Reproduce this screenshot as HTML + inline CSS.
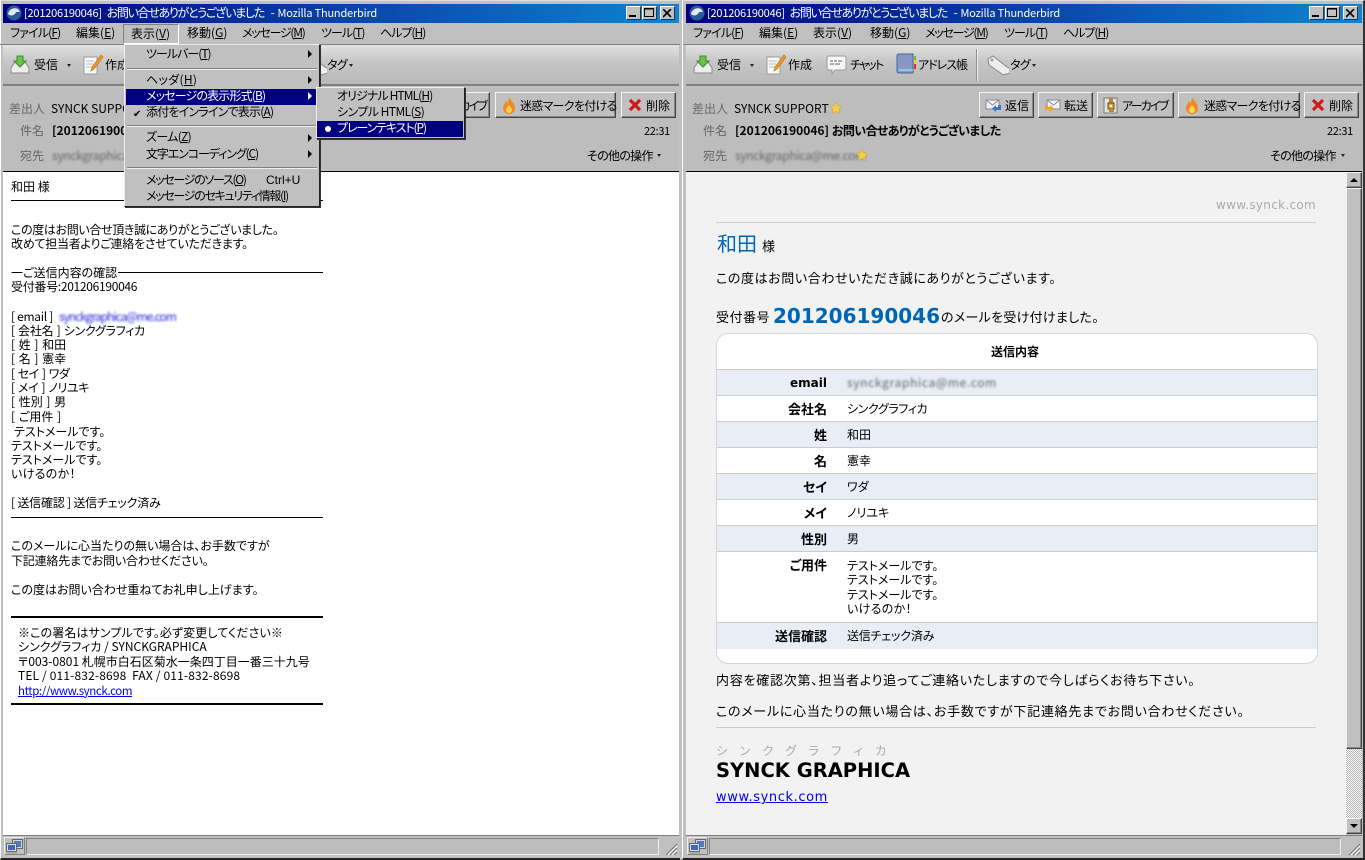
<!DOCTYPE html>
<html><head><meta charset="utf-8"><style>
html,body{margin:0;padding:0;width:1365px;height:860px;overflow:hidden;background:#c0c0c0}
*{box-sizing:border-box}
.a,.t,svg{position:absolute}
.t{white-space:nowrap;font:12px/14px "Noto Sans CJK JP","WenQuanYi Zen Hei",sans-serif;font-feature-settings:"palt";color:#000;margin-top:1px}
.l{font-family:"Liberation Sans","Noto Sans CJK JP",sans-serif}
.d{font-family:"DejaVu Sans","Noto Sans CJK JP",sans-serif}
.g{color:#666}
.b{font-weight:bold}
.w{color:#fff}
.s{font-size:11px;letter-spacing:-.2px}
.tj{letter-spacing:-1.3px;margin:0 4px 0 2px}
.bj{letter-spacing:-.55px}
.m{font-size:13px}
.win{position:absolute;top:0;height:860px;background:#c0c0c0;border-top:1px solid #dfdfdf;border-left:1px solid #fff;border-right:2px solid #333;border-bottom:2px solid #222;overflow:hidden}
.title{position:absolute;left:2px;top:3px;right:2px;height:19px;background:linear-gradient(90deg,#000080,#1084d0)}
.wb{position:absolute;top:6px;width:15px;height:14px;background:#c0c0c0;border:1px solid;border-color:#fff #333 #333 #fff}
.btn{position:absolute;top:92px;height:26px;background:#c0c0c0;border:1px solid;border-color:#f4f4f4 #444 #444 #f4f4f4;box-shadow:inset -1px -1px #888}
.arr{position:absolute;width:0;height:0;border-left:2.5px solid transparent;border-right:2.5px solid transparent;border-top:3px solid #222}
.pop{position:absolute;background:#c0c0c0;border:1px solid;border-color:#eee #222 #222 #eee;box-shadow:1px 1px 0 #333}
.hr{position:absolute;height:2px;border-top:1px solid #808080;border-bottom:1px solid #f0f0f0}
.ra{position:absolute;width:0;height:0;border-top:4px solid transparent;border-bottom:4px solid transparent;border-left:4px solid #000}
.k{position:absolute;height:1px;background:#000;left:11px;width:312px}
.row{position:absolute;left:717px;width:600px;border-bottom:1px solid #ccc}
.lab{font-weight:bold;right:538px}
.blur{filter:blur(1.1px)}
.br{word-spacing:1px}
.tm{font-size:11px;letter-spacing:-.3px}
.cell{position:absolute;top:837px;width:21px;height:18px;border:1px solid;border-color:#eee #808080 #808080 #eee}
</style></head><body>

<!-- LEFT WINDOW -->
<div class="win" style="left:0;width:683px"></div>
<div class="title" style="left:3px;width:676px;top:4px"></div>
<div class="a" style="left:0;top:23px;width:680px;height:22px;border-bottom:1px solid #808080"></div>
<div class="a" style="left:3px;top:45px;width:676px;height:41px;background:linear-gradient(#e2e2e2,#c8c8c8 40%,#b8b8b8);border-bottom:2px solid #808080"></div>
<div class="a" style="left:3px;top:88px;width:676px;height:84px;background:#bdbdbd;border-bottom:1px solid #000"></div>
<div class="a" style="left:3px;top:172px;width:676px;height:663px;background:#fff"></div>
<div class="a" style="left:3px;top:835px;width:676px;height:21px;background:#c0c0c0;border-top:1px solid #808080"></div>
<div class="a" style="left:26px;top:838px;width:633px;height:17px;background:#bdbdbd;border:1px solid;border-color:#808080 #eee #eee #808080"></div>

<svg style="left:6px;top:5px" width="16" height="16" viewBox="0 0 16 16"><circle cx="8" cy="8" r="7.5" fill="#2a5a9a"/><path d="M2 9c1-5 6-7 10-5l2 3-4 0c-1 3-5 5-8 2z" fill="#e8e8e8"/></svg>
<span class="t w" style="left:24px;top:5px"><span class="s">[201206190046]</span> <span class="tj">お問い合せありがとうございました</span> - <span class="s">Mozilla Thunderbird</span></span>
<div class="wb" style="left:626px"><svg style="left:2px;top:8px" width="8" height="2"><path d="M0 0h7v2H0z" fill="#000"/></svg></div>
<div class="wb" style="left:642px"><svg style="left:1px;top:1px" width="11" height="10"><path d="M.5.500h9v8h-9z M0 1h10" fill="none" stroke="#000"/></svg></div>
<div class="wb" style="left:660px"><svg style="left:2px;top:2px" width="10" height="9"><path d="M0 0l8 8M8 0L0 8" stroke="#000" stroke-width="1.6"/></svg></div>

<span class="t" style="left:10px;top:25px;letter-spacing:-.85px">ファイル(<u>F</u>)</span>
<span class="t" style="left:76px;top:25px">編集(<u>E</u>)</span>
<div class="a" style="left:123px;top:24px;width:56px;height:20px;border:1px solid;border-color:#808080 #fff #fff #808080"></div>
<span class="t" style="left:131px;top:26px">表示(<u>V</u>)</span>
<span class="t" style="left:187px;top:25px">移動(<u>G</u>)</span>
<span class="t" style="left:242px;top:25px;letter-spacing:-1.25px">メッセージ(<u>M</u>)</span>
<span class="t" style="left:321px;top:25px;letter-spacing:-1px">ツール(<u>T</u>)</span>
<span class="t" style="left:380px;top:25px;letter-spacing:-1px">ヘルプ(<u>H</u>)</span>

<svg style="left:10px;top:54px" width="20" height="20" viewBox="0 0 20 20"><path d="M1 14l4-6h10l4 6v5H1z" fill="#eee" stroke="#888"/><path d="M7 2h6v5h3l-6 6-6-6h3z" fill="#6cc24a" stroke="#3a8a2a"/></svg>
<span class="t" style="left:34px;top:57px">受信</span><div class="arr" style="left:67px;top:64px"></div>
<svg style="left:83px;top:54px" width="21" height="21" viewBox="0 0 21 21"><path d="M1 3h13v17H1z" fill="#fafafa" stroke="#999"/><path d="M3 7h8M3 10h7M3 13h6" stroke="#bbb"/><path d="M18 1l2 2-9 12-3 2 1-4z" fill="#f0962a" stroke="#b86a10" stroke-width=".6"/></svg>
<span class="t" style="left:105px;top:57px">作成</span>
<svg style="left:304px;top:54px" width="23" height="23" viewBox="0 0 23 23"><path d="M2 5l5-3 14 11a3.500 3.500 0 0 1-1 7 3.500 3.500 0 0 1-4 0L3 11z" fill="#eee" stroke="#888"/></svg>
<span class="t" style="left:327px;top:57px;letter-spacing:-.8px">タグ</span><div class="arr" style="left:349px;top:64px"></div>

<span class="t g" style="left:9px;top:101px">差出人</span>
<span class="t" style="left:51px;top:101px">SYNCK SUPPORT</span>
<span class="t g" style="left:20px;top:123px">件名</span>
<span class="t b" style="left:52px;top:123px">[201206190046] <span class="bj">お問い合せありがとうございました</span></span>
<span class="t g" style="left:20px;top:148px">宛先</span>
<span class="t blur g" style="left:52px;top:148px;letter-spacing:-.3px">synckgraphica@me.com</span>
<span class="t tm" style="left:644px;top:123px">22:31</span>
<span class="t" style="left:587px;top:148px;letter-spacing:-.7px">その他の操作</span><div class="arr" style="left:657px;top:154px"></div>

<div class="btn" style="left:400px;width:90px"></div><span class="t" style="right:879px;top:98px;letter-spacing:-1.8px">アーカイブ</span>
<div class="btn" style="left:495px;width:121px"></div>
<svg style="left:502px;top:97px" width="14" height="17" viewBox="0 0 14 17"><path d="M7 0c1 3 6 6 6 11a6 6 0 0 1-12 0c0-3 2-4 3-7 1 1 1 2 1 3 1-2 2-4 2-7z" fill="#f08a20"/><path d="M7 8c1 2 3 3 3 5a3 3 0 0 1-6 0c0-2 2-3 3-5z" fill="#fcd25a"/></svg>
<span class="t" style="left:520px;top:98px;letter-spacing:-.7px">迷惑マークを付ける</span>
<div class="btn" style="left:621px;width:55px"></div>
<svg style="left:628px;top:98px" width="14" height="14" viewBox="0 0 14 14"><path d="M2 2l10 10M12 2L2 12" stroke="#d01818" stroke-width="3.2"/></svg>
<span class="t" style="left:646px;top:98px">削除</span>

<!-- left body -->
<span class="t" style="left:11px;top:179px">和田 様</span><div class="k" style="top:200px"></div>
<span class="t" style="left:11px;top:222px;letter-spacing:-.35px">この度はお問い合せ頂き誠にありがとうございました。</span>
<span class="t" style="left:11px;top:236px;letter-spacing:-.25px">改めて担当者よりご連絡をさせていただきます。</span>
<span class="t" style="left:11px;top:265px">一ご送信内容の確認</span><div class="k" style="top:272px;left:118px;width:205px"></div>
<span class="t" style="left:11px;top:279px;letter-spacing:-.3px">受付番号:201206190046</span>
<span class="t" style="left:11px;top:309px;letter-spacing:-.3px">[ email ]</span>
<span class="t blur" style="left:59px;top:309px;color:#2a2ad8;letter-spacing:-1px">synckgraphica@me.com</span>
<span class="t br" style="left:11px;top:323px;letter-spacing:-.3px">[ 会社名 ] シンクグラフィカ</span>
<span class="t br" style="left:11px;top:337px">[ 姓 ] 和田</span>
<span class="t br" style="left:11px;top:351px">[ 名 ] 憲幸</span>
<span class="t br" style="left:11px;top:366px;letter-spacing:-.5px">[ セイ ] ワダ</span>
<span class="t br" style="left:11px;top:380px;letter-spacing:-.4px">[ メイ ] ノリユキ</span>
<span class="t br" style="left:11px;top:394px">[ 性別 ] 男</span>
<span class="t br" style="left:11px;top:409px">[ ご用件 ]</span>
<span class="t" style="left:14px;top:424px">テストメールです。</span>
<span class="t" style="left:11px;top:438px">テストメールです。</span>
<span class="t" style="left:11px;top:452px">テストメールです。</span>
<span class="t" style="left:11px;top:466px;letter-spacing:.3px">いけるのか！</span>
<span class="t" style="left:11px;top:495px;letter-spacing:-.2px">[ 送信確認 ] 送信チェック済み</span><div class="k" style="top:517px"></div>
<span class="t" style="left:11px;top:538px">このメールに心当たりの無い場合は、お手数ですが</span>
<span class="t" style="left:11px;top:553px;letter-spacing:-.2px">下記連絡先までお問い合わせください。</span>
<span class="t" style="left:11px;top:582px">この度はお問い合わせ重ねてお礼申し上げます。</span>
<div class="k" style="top:616px;height:2px"></div>
<span class="t" style="left:18px;top:625px;letter-spacing:.1px">※この署名はサンプルです。必ず変更してください※</span>
<span class="t" style="left:18px;top:639px">シンクグラフィカ / SYNCKGRAPHICA</span>
<span class="t" style="left:18px;top:654px">〒003-0801 札幌市白石区菊水一条四丁目一番三十九号</span>
<span class="t" style="left:18px;top:668px;letter-spacing:.15px">TEL / 011-832-8698&nbsp; FAX / 011-832-8698</span>
<span class="t" style="left:18px;top:683px;color:#00e;letter-spacing:-.4px;font-size:11.5px"><u>http://www.synck.com</u></span>
<div class="k" style="top:703px;height:2px"></div>

<!-- left status -->
<div class="cell" style="left:4px"></div>
<svg style="left:6px;top:838px" width="17" height="16" viewBox="0 0 17 16"><path d="M6.500 1.500h10v9h-10z" fill="#d4d4d4" stroke="#666"/><path d="M8 3h7v6H8z" fill="#4a7ac8"/><path d="M.5 5.500h10v8h-10z" fill="#e0e0e0" stroke="#666"/><path d="M2 7h7v5H2z" fill="#3a6ac0"/><path d="M1 15h10" stroke="#999"/></svg>
<svg style="left:664px;top:842px" width="14" height="14" viewBox="0 0 14 14"><path d="M13 2L2 13M13 6l-7 7M13 10l-3 3" stroke="#777"/><path d="M13 4l-9 9M13 8l-5 5" stroke="#fff"/></svg>

<!-- menu popup -->
<div class="pop" style="left:124px;top:44px;width:196px;height:163px"></div>
<span class="t" style="left:146px;top:46px;letter-spacing:-1px">ツールバー(<u>T</u>)</span><div class="ra" style="left:308px;top:50px"></div>
<div class="hr" style="left:127px;top:68px;width:190px"></div>
<span class="t" style="left:146px;top:72px;letter-spacing:.3px">ヘッダ(<u>H</u>)</span><div class="ra" style="left:308px;top:76px"></div>
<div class="a" style="left:126px;top:89px;width:190px;height:16px;background:#000080"></div>
<span class="t w" style="left:146px;top:88px;letter-spacing:-.85px">メッセージの表示形式(<u>B</u>)</span><div class="ra" style="left:308px;top:92px;border-left-color:#fff"></div>
<span class="t" style="left:146px;top:104px;letter-spacing:-.8px">添付をインラインで表示(<u>A</u>)</span>
<span class="t" style="left:133px;top:105px;font-size:10px">✔</span>
<div class="hr" style="left:127px;top:125px;width:190px"></div>
<span class="t" style="left:146px;top:129px;letter-spacing:-.7px">ズーム(<u>Z</u>)</span><div class="ra" style="left:308px;top:134px"></div>
<span class="t" style="left:146px;top:146px;letter-spacing:-1.1px">文字エンコーディング(<u>C</u>)</span><div class="ra" style="left:308px;top:150px"></div>
<div class="hr" style="left:127px;top:167px;width:190px"></div>
<span class="t" style="left:146px;top:172px;letter-spacing:-1.3px">メッセージのソース(<u>O</u>)</span><span class="t l" style="left:266px;top:172px">Ctrl+U</span>
<span class="t" style="left:146px;top:188px;letter-spacing:-1.3px">メッセージのセキュリティ情報(<u>I</u>)</span>

<div class="pop" style="left:316px;top:87px;width:149px;height:52px"></div>
<span class="t" style="left:337px;top:88px;letter-spacing:-.9px">オリジナル HTML(<u>H</u>)</span>
<span class="t" style="left:337px;top:104px;letter-spacing:-.55px">シンプル HTML(<u>S</u>)</span>
<div class="a" style="left:317px;top:121px;width:146px;height:16px;background:#000080"></div>
<div class="a" style="left:325px;top:126px;width:6px;height:6px;border-radius:50%;background:#fff"></div>
<span class="t w" style="left:337px;top:120px;letter-spacing:-1.1px">プレーンテキスト(<u>P</u>)</span>

<!-- RIGHT WINDOW -->
<div class="a" style="left:680px;top:0;width:3px;height:860px;background:#c0c0c0"></div>
<div class="win" style="left:682px;width:683px"></div>
<div class="title" style="left:686px;width:676px;top:4px"></div>
<div class="a" style="left:683px;top:23px;width:680px;height:22px;border-bottom:1px solid #808080"></div>
<div class="a" style="left:686px;top:45px;width:676px;height:41px;background:linear-gradient(#e2e2e2,#c8c8c8 40%,#b8b8b8);border-bottom:2px solid #808080"></div>
<div class="a" style="left:686px;top:88px;width:676px;height:84px;background:#bdbdbd;border-bottom:1px solid #000"></div>
<div class="a" style="left:686px;top:172px;width:660px;height:663px;background:#f2f2f2"></div>
<div class="a" style="left:686px;top:835px;width:676px;height:21px;background:#c0c0c0;border-top:1px solid #808080"></div>
<div class="a" style="left:709px;top:838px;width:632px;height:17px;background:#bdbdbd;border:1px solid;border-color:#808080 #eee #eee #808080"></div>

<svg style="left:689px;top:5px" width="16" height="16" viewBox="0 0 16 16"><circle cx="8" cy="8" r="7.5" fill="#2a5a9a"/><path d="M2 9c1-5 6-7 10-5l2 3-4 0c-1 3-5 5-8 2z" fill="#e8e8e8"/></svg>
<span class="t w" style="left:707px;top:5px"><span class="s">[201206190046]</span> <span class="tj">お問い合せありがとうございました</span> - <span class="s">Mozilla Thunderbird</span></span>
<div class="wb" style="left:1309px"><svg style="left:2px;top:8px" width="8" height="2"><path d="M0 0h7v2H0z" fill="#000"/></svg></div>
<div class="wb" style="left:1325px"><svg style="left:1px;top:1px" width="11" height="10"><path d="M.5.500h9v8h-9z M0 1h10" fill="none" stroke="#000"/></svg></div>
<div class="wb" style="left:1343px"><svg style="left:2px;top:2px" width="10" height="9"><path d="M0 0l8 8M8 0L0 8" stroke="#000" stroke-width="1.6"/></svg></div>

<span class="t" style="left:693px;top:25px;letter-spacing:-.85px">ファイル(<u>F</u>)</span>
<span class="t" style="left:759px;top:25px">編集(<u>E</u>)</span>
<span class="t" style="left:813px;top:25px">表示(<u>V</u>)</span>
<span class="t" style="left:870px;top:25px">移動(<u>G</u>)</span>
<span class="t" style="left:925px;top:25px;letter-spacing:-1.25px">メッセージ(<u>M</u>)</span>
<span class="t" style="left:1004px;top:25px;letter-spacing:-1px">ツール(<u>T</u>)</span>
<span class="t" style="left:1063px;top:25px;letter-spacing:-1px">ヘルプ(<u>H</u>)</span>

<svg style="left:693px;top:54px" width="20" height="20" viewBox="0 0 20 20"><path d="M1 14l4-6h10l4 6v5H1z" fill="#eee" stroke="#888"/><path d="M7 2h6v5h3l-6 6-6-6h3z" fill="#6cc24a" stroke="#3a8a2a"/></svg>
<span class="t" style="left:717px;top:57px">受信</span><div class="arr" style="left:750px;top:64px"></div>
<svg style="left:766px;top:54px" width="21" height="21" viewBox="0 0 21 21"><path d="M1 3h13v17H1z" fill="#fafafa" stroke="#999"/><path d="M3 7h8M3 10h7M3 13h6" stroke="#bbb"/><path d="M18 1l2 2-9 12-3 2 1-4z" fill="#f0962a" stroke="#b86a10" stroke-width=".6"/></svg>
<span class="t" style="left:788px;top:57px">作成</span>
<svg style="left:826px;top:55px" width="21" height="20" viewBox="0 0 21 20"><path d="M3 1h15a2 2 0 0 1 2 2v10a2 2 0 0 1-2 2H9l-3 4v-4H3a2 2 0 0 1-2-2V3a2 2 0 0 1 2-2z" fill="#f6f6f6" stroke="#999"/><path d="M4 6h3M8 6h3M12 6h4M4 9h4M9 9h5" stroke="#666"/></svg>
<span class="t" style="left:850px;top:57px;letter-spacing:-1.7px">チャット</span>
<svg style="left:895px;top:53px" width="22" height="22" viewBox="0 0 22 22"><path d="M2 3a2 2 0 0 1 2-2h14v19H4a2 2 0 0 1-2-2z" fill="#7d9ccc" stroke="#46648e"/><circle cx="10" cy="9" r="4" fill="none" stroke="#c07ab0"/><path d="M4 17h14" stroke="#dde"/><path d="M19 3h2v4h-2z" fill="#7ab82e"/><path d="M19 7h2v4h-2z" fill="#ecd02a"/><path d="M19 11h2v5h-2z" fill="#d83030"/></svg>
<span class="t" style="left:918px;top:57px;letter-spacing:-1px">アドレス帳</span>
<div class="a" style="left:976px;top:49px;width:2px;height:32px;background:linear-gradient(90deg,#909090 50%,#eee 50%)"></div>
<svg style="left:986px;top:54px" width="23" height="23" viewBox="0 0 23 23"><path d="M2 5l5-3 14 11a3.500 3.500 0 0 1-1 7 3.500 3.500 0 0 1-4 0L3 11z" fill="#eee" stroke="#888"/><circle cx="6" cy="6" r="1.500" fill="#999"/></svg>
<span class="t" style="left:1010px;top:57px;letter-spacing:-.8px">タグ</span><div class="arr" style="left:1032px;top:64px"></div>

<span class="t g" style="left:692px;top:101px">差出人</span>
<span class="t" style="left:734px;top:101px">SYNCK SUPPORT</span>
<svg style="left:830px;top:102px" width="12" height="12" viewBox="0 0 12 12"><path d="M6 0l1.800 3.900 4.200.5-3.100 2.900.8 4.200L6 9.400 2.300 11.500l.8-4.200L0 4.400l4.200-.5z" fill="#f5d04e" stroke="#c8a020" stroke-width=".5"/></svg>
<span class="t g" style="left:703px;top:123px">件名</span>
<span class="t b" style="left:735px;top:123px">[201206190046] <span class="bj">お問い合せありがとうございました</span></span>
<span class="t g" style="left:703px;top:148px">宛先</span>
<span class="t blur g" style="left:735px;top:148px;letter-spacing:-.3px">synckgraphica@me.com</span>
<svg style="left:856px;top:149px" width="12" height="12" viewBox="0 0 12 12"><path d="M6 0l1.800 3.900 4.200.5-3.100 2.900.8 4.200L6 9.400 2.300 11.500l.8-4.200L0 4.400l4.200-.5z" fill="#f5d04e" stroke="#c8a020" stroke-width=".5"/></svg>
<span class="t tm" style="left:1327px;top:123px">22:31</span>
<span class="t" style="left:1270px;top:148px;letter-spacing:-.7px">その他の操作</span><div class="arr" style="left:1341px;top:154px"></div>

<div class="btn" style="left:979px;width:55px"></div>
<svg style="left:985px;top:98px" width="17" height="15" viewBox="0 0 17 15"><path d="M1 2h13v9H1z" fill="#f2f2f2" stroke="#889"/><path d="M1 2l6.500 5L14 2" fill="none" stroke="#889"/><path d="M16 7v5h-5v2l-4-3.500L11 7v2h2V7z" fill="#3a78c0"/></svg>
<span class="t" style="left:1005px;top:98px">返信</span>
<div class="btn" style="left:1038px;width:55px"></div>
<svg style="left:1044px;top:98px" width="17" height="15" viewBox="0 0 17 15"><path d="M3 2h13v9H3z" fill="#f2f2f2" stroke="#889"/><path d="M3 2l6.500 5L16 2" fill="none" stroke="#889"/><path d="M1 7v5h5v2l4-3.500L6 7v2H4V7z" fill="#f0a030"/></svg>
<span class="t" style="left:1064px;top:98px">転送</span>
<div class="btn" style="left:1097px;width:77px"></div>
<svg style="left:1103px;top:97px" width="15" height="17" viewBox="0 0 15 17"><path d="M1 1h13v15H1z" fill="#e4e4dc" stroke="#777"/><path d="M6 1h4v5H6z" fill="#b88a30"/><path d="M5 6h6v6H5z" fill="#d8a850" stroke="#664a10"/><path d="M7 8h2v2H7z" fill="#fff"/><path d="M6 14h5" stroke="#b88a30" stroke-width="2"/></svg>
<span class="t" style="left:1122px;top:98px;letter-spacing:-1.8px">アーカイブ</span>
<div class="btn" style="left:1178px;width:122px"></div>
<svg style="left:1185px;top:97px" width="14" height="17" viewBox="0 0 14 17"><path d="M7 0c1 3 6 6 6 11a6 6 0 0 1-12 0c0-3 2-4 3-7 1 1 1 2 1 3 1-2 2-4 2-7z" fill="#f08a20"/><path d="M7 8c1 2 3 3 3 5a3 3 0 0 1-6 0c0-2 2-3 3-5z" fill="#fcd25a"/></svg>
<span class="t" style="left:1204px;top:98px;letter-spacing:-.7px">迷惑マークを付ける</span>
<div class="btn" style="left:1304px;width:55px"></div>
<svg style="left:1311px;top:98px" width="14" height="14" viewBox="0 0 14 14"><path d="M2 2l10 10M12 2L2 12" stroke="#d01818" stroke-width="3.2"/></svg>
<span class="t" style="left:1329px;top:98px">削除</span>

<!-- right body -->
<span class="t d" style="left:1216px;top:197px;color:#aaa;letter-spacing:.3px">www.synck.com</span>
<div class="a" style="left:716px;top:222px;width:600px;height:1px;background:#ccc"></div>
<span class="t" style="left:717px;top:231px;font-size:20px;line-height:22px;color:#0066b3">和田</span>
<span class="t m" style="left:762px;top:238px">様</span>
<span class="t m" style="left:716px;top:270px;letter-spacing:.6px">この度はお問い合わせいただき誠にありがとうございます。</span>
<span class="t m" style="left:716px;top:309px;letter-spacing:.5px">受付番号</span>
<span class="t d b" style="left:773px;top:303px;font-size:20px;line-height:24px;color:#0066b3">201206190046</span>
<span class="t m" style="left:941px;top:309px;letter-spacing:.3px">のメールを受け付けました。</span>

<div class="a" style="left:716px;top:333px;width:602px;height:331px;background:#fff;border:1px solid #d4d4d4;border-radius:12px"></div>
<span class="t b" style="left:991px;top:344px">送信内容</span>
<div class="row" style="top:369px;height:27px;background:#e8edf6;border-top:1px solid #ccc"></div>
<div class="row" style="top:396px;height:26px"></div>
<div class="row" style="top:422px;height:26px;background:#e8edf6"></div>
<div class="row" style="top:448px;height:26px"></div>
<div class="row" style="top:474px;height:26px;background:#e8edf6"></div>
<div class="row" style="top:500px;height:26px"></div>
<div class="row" style="top:526px;height:26px;background:#e8edf6"></div>
<div class="row" style="top:552px;height:71px"></div>
<div class="row" style="top:623px;height:26px;background:#e8edf6;border-bottom:0"></div>

<span class="t lab d" style="top:375px">email</span>
<span class="t blur g" style="left:847px;top:375px;letter-spacing:.65px">synckgraphica@me.com</span>
<span class="t lab m" style="top:401px">会社名</span><span class="t" style="left:847px;top:401px;letter-spacing:-.4px">シンクグラフィカ</span>
<span class="t lab m" style="top:427px">姓</span><span class="t" style="left:847px;top:427px">和田</span>
<span class="t lab m" style="top:453px">名</span><span class="t" style="left:847px;top:453px">憲幸</span>
<span class="t lab m" style="top:479px">セイ</span><span class="t" style="left:847px;top:479px">ワダ</span>
<span class="t lab m" style="top:505px">メイ</span><span class="t" style="left:847px;top:505px">ノリユキ</span>
<span class="t lab m" style="top:531px">性別</span><span class="t" style="left:847px;top:531px">男</span>
<span class="t lab m" style="top:557px">ご用件</span>
<span class="t" style="left:847px;top:558px">テストメールです。</span>
<span class="t" style="left:847px;top:572px">テストメールです。</span>
<span class="t" style="left:847px;top:587px">テストメールです。</span>
<span class="t" style="left:847px;top:601px;letter-spacing:.3px">いけるのか！</span>
<span class="t lab m" style="top:628px">送信確認</span><span class="t" style="left:847px;top:628px;letter-spacing:-.2px">送信チェック済み</span>

<span class="t m" style="left:716px;top:672px;letter-spacing:.75px">内容を確認次第、担当者より追ってご連絡いたしますので今しばらくお待ち下さい。</span>
<span class="t m" style="left:716px;top:703px;letter-spacing:.75px">このメールに心当たりの無い場合は、お手数ですが下記連絡先までお問い合わせください。</span>
<div class="a" style="left:716px;top:727px;width:600px;height:1px;background:#ccc"></div>
<span class="t" style="left:716px;top:743px;color:#aaa;letter-spacing:12.400px">シンクグラフィカ</span>
<span class="t d b" style="left:716px;top:758px;font-size:19.500px;line-height:24px">SYNCK GRAPHICA</span>
<span class="t d" style="left:716px;top:790px;font-size:13px;color:#00e;letter-spacing:.6px"><u>www.synck.com</u></span>

<!-- scrollbar -->
<div class="a" style="left:1346px;top:172px;width:16px;height:661px;background:repeating-conic-gradient(#fff 0 25%,#b0b0b0 0 50%) 0 0/2px 2px"></div>
<div class="btn" style="left:1346px;top:172px;width:16px;height:16px"></div><div class="a" style="left:1350px;top:178px;width:0;height:0;border-left:4px solid transparent;border-right:4px solid transparent;border-bottom:4px solid #000"></div>
<div class="btn" style="left:1346px;top:188px;width:16px;height:561px"></div>
<div class="btn" style="left:1346px;top:818px;width:16px;height:16px"></div><div class="a" style="left:1350px;top:824px;width:0;height:0;border-left:4px solid transparent;border-right:4px solid transparent;border-top:4px solid #000"></div>

<div class="cell" style="left:687px"></div>
<svg style="left:689px;top:838px" width="17" height="16" viewBox="0 0 17 16"><path d="M6.500 1.500h10v9h-10z" fill="#d4d4d4" stroke="#666"/><path d="M8 3h7v6H8z" fill="#4a7ac8"/><path d="M.5 5.500h10v8h-10z" fill="#e0e0e0" stroke="#666"/><path d="M2 7h7v5H2z" fill="#3a6ac0"/><path d="M1 15h10" stroke="#999"/></svg>
<svg style="left:1347px;top:842px" width="14" height="14" viewBox="0 0 14 14"><path d="M13 2L2 13M13 6l-7 7M13 10l-3 3" stroke="#777"/><path d="M13 4l-9 9M13 8l-5 5" stroke="#fff"/></svg>
</body></html>
